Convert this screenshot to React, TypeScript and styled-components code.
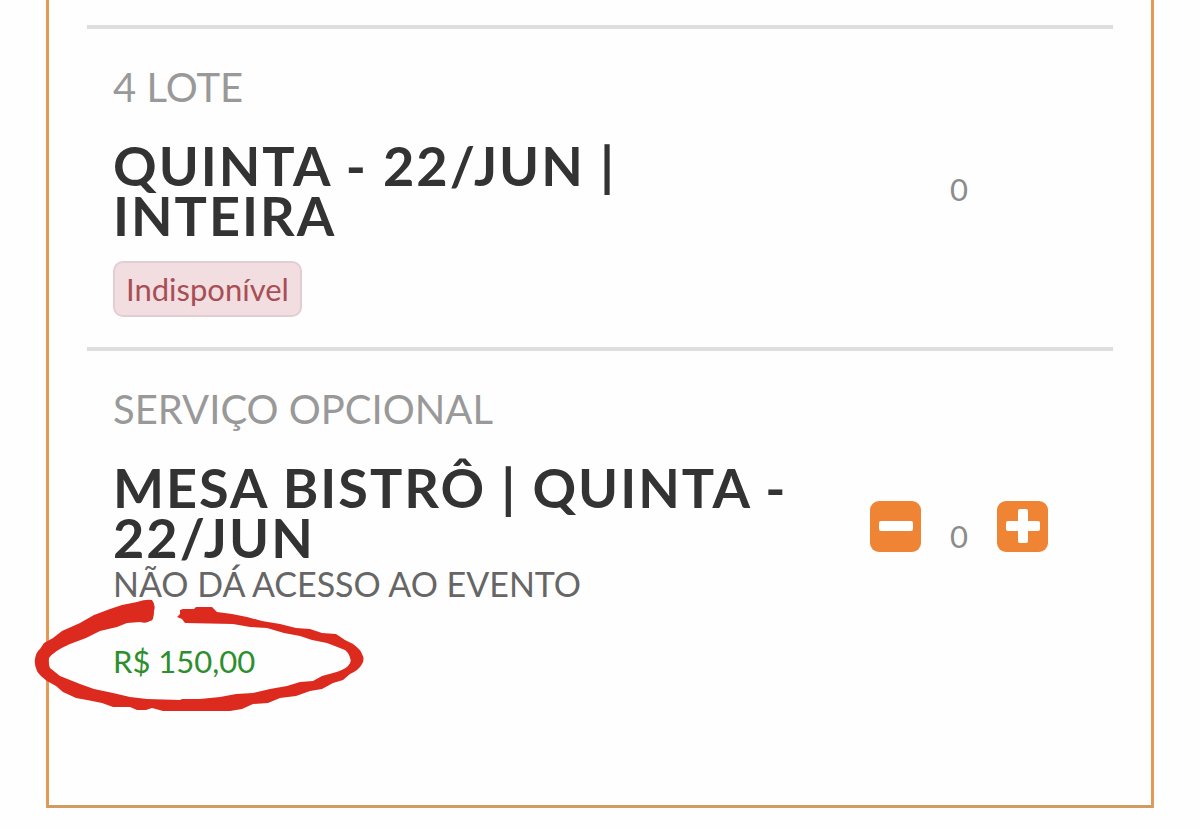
import React, { useState } from "react";
import styled, { createGlobalStyle } from "styled-components";

const GlobalStyle = createGlobalStyle`
  * { box-sizing: border-box; }
  body {
    margin: 0;
    background: #fefefe;
    font-family: Lato, "Liberation Sans", sans-serif;
    color: #333;
  }
`;

const Page = styled.main`
  padding: 0 46px 20px;
`;

const Card = styled.section`
  border: 3px solid #e39a56;
  border-top: 0;
  border-bottom-color: #d29a5c;
  padding: 25px 38px 94px;
`;

const TicketRow = styled.article`
  display: grid;
  grid-template-columns: minmax(0, 1fr) 308px;
  align-items: center;
  border-top: 4px solid #dedede;
  padding: 32px 0 30px 26px;
`;

const Info = styled.div`
  padding-right: 8px;
`;

const Lot = styled.p`
  margin: 0;
  font-size: 40px;
  line-height: 52px;
  color: #999;
`;

const Title = styled.h2`
  margin: 28px 0 0;
  font-size: 54px;
  font-weight: 700;
  line-height: 50px;
  letter-spacing: 2px;
`;

const Status = styled.span`
  display: inline-block;
  margin-top: 20px;
  padding: 0 11px;
  border: 2px solid #e5ccd3;
  border-radius: 10px;
  background: #f2dee0;
  font-size: 31px;
  line-height: 52px;
  color: #a84f55;
`;

const Description = styled.p`
  margin: 0;
  font-size: 34px;
  line-height: 42px;
  color: #666;
`;

const PriceBox = styled.div`
  position: relative;
  width: fit-content;
  margin-top: 36px;
`;

const Price = styled.p`
  margin: 0;
  font-size: 31px;
  line-height: 40px;
  color: #2c8f2c;
`;

const MarkerRing = styled.svg`
  position: absolute;
  left: -83px;
  top: -45px;
  width: 340px;
  height: 120px;
  pointer-events: none;
`;

const Stepper = styled.div<{ $raised?: boolean }>`
  display: flex;
  align-items: center;
  justify-content: center;
  gap: 16px;
  padding-bottom: ${(p) => (p.$raised ? "12px" : "0")};
`;

const Quantity = styled.output<{ $lowered?: boolean }>`
  width: 44px;
  padding-top: ${(p) => (p.$lowered ? "20px" : "0")};
  font-size: 31px;
  line-height: 40px;
  text-align: center;
  color: #8c8c8c;
`;

const StepButton = styled.button`
  display: block;
  width: 51px;
  height: 51px;
  padding: 0;
  border: 0;
  border-radius: 9px;
  background: #ee8434;
  cursor: pointer;

  svg {
    display: block;
    width: 51px;
    height: 51px;
  }
`;

export default function App() {
  const [count, setCount] = useState(0);

  return (
    <>
      <GlobalStyle />
      <Page>
        <Card>
          <TicketRow>
            <Info>
              <Lot>4 LOTE</Lot>
              <Title>
                QUINTA - 22/JUN |<br />
                INTEIRA
              </Title>
              <Status>Indisponível</Status>
            </Info>
            <Stepper>
              <Quantity>0</Quantity>
            </Stepper>
          </TicketRow>

          <TicketRow>
            <Info>
              <Lot>SERVIÇO OPCIONAL</Lot>
              <Title>MESA BISTRÔ | QUINTA - 22/JUN</Title>
              <Description>NÃO DÁ ACESSO AO EVENTO</Description>
              <PriceBox>
                <Price>R$ 150,00</Price>
                <MarkerRing viewBox="30 595 340 120" aria-hidden="true">
                  <path
                    fill="#dc2a1f"
                    d="M152 599 Q156 604 154 610 Q154 620 150 620 Q146 623 140 621 L127 622 L117 626 L100 630 L86 637 L70 643 Q54 650 49 657 Q48 662 50 667 L60 675 L80 683 L94 688 L113 692 L130 696 L147 698 L180 699 L182 698 L200 698 L220 696 L236 693 L253 692 L270 688 L287 685 L300 681 L313 680 L322 675 L333 672 Q344 669 348 665 Q352 661 350 657 Q349 652 345 649 L327 642 L312 639 L300 635 L284 632 L267 627 L250 626 L233 623 L185 622 L182 618 L177 616 L180 613 L180 609 L183 608 L194 608 L196 606 L212 606 L217 611 L232 613 L247 616 L262 620 L280 623 L296 627 L310 628 L322 632 L336 633 L345 639 L353 643 Q361 649 362 653 Q365 658 362 663 Q359 669 350 673 L343 679 L333 682 L322 688 L310 690 L296 695 L280 697 L268 702 L253 703 L242 708 L230 710 L163 710 L152 707 L146 709 L137 709 L130 706 L113 706 L102 702 L87 699 L76 697 L63 691 L56 685 L47 680 Q39 674 37 670 Q34 663 35 658 Q36 651 40 648 L44 642 L53 637 L62 630 L80 622 L94 614 L110 608 L122 604 L137 601 Q146 598 152 599 Z"
                  />
                </MarkerRing>
              </PriceBox>
            </Info>
            <Stepper $raised>
              <StepButton
                type="button"
                aria-label="Diminuir quantidade"
                onClick={() => setCount((n) => Math.max(0, n - 1))}
              >
                <svg viewBox="0 0 51 51" aria-hidden="true">
                  <rect x="9" y="20" width="34" height="10" rx="2" fill="#fff" />
                </svg>
              </StepButton>
              <Quantity $lowered>{count}</Quantity>
              <StepButton
                type="button"
                aria-label="Aumentar quantidade"
                onClick={() => setCount((n) => n + 1)}
              >
                <svg viewBox="0 0 51 51" aria-hidden="true">
                  <rect x="9" y="20" width="34" height="10" rx="2" fill="#fff" />
                  <rect x="21" y="8" width="10" height="34" rx="2" fill="#fff" />
                </svg>
              </StepButton>
            </Stepper>
          </TicketRow>
        </Card>
      </Page>
    </>
  );
}
